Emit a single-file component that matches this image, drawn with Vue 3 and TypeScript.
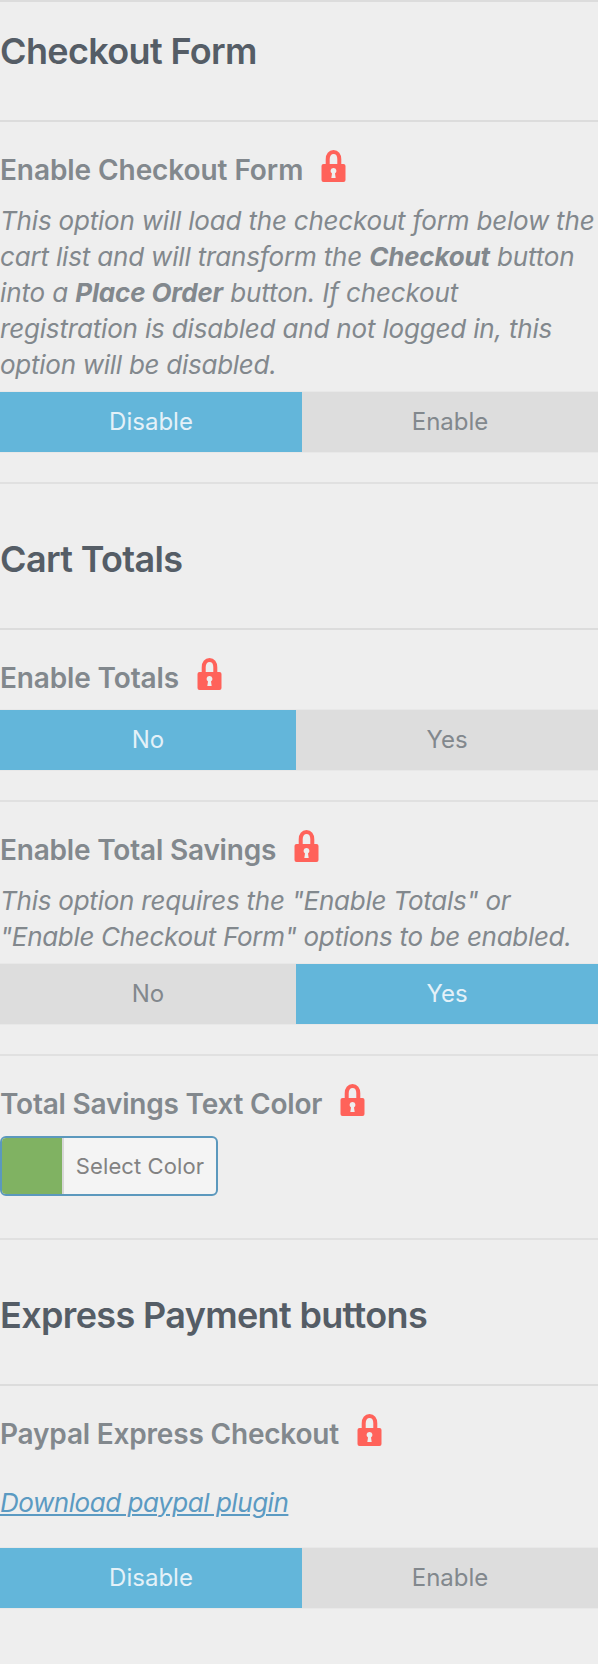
<script setup lang="ts">
interface Line {
  tracking: number
  parts: { text: string; strong?: boolean }[]
}
interface Field {
  label: string
  tracking?: number
  kind: 'toggle' | 'color'
  options?: string[]
  active?: number
  description?: Line[]
  link?: string
}
interface Section {
  title: string
  fields: Field[]
}

const sections: Section[] = [
  {
    title: 'Checkout Form',
    fields: [
      {
        label: 'Enable Checkout Form',
        tracking: -0.08,
        kind: 'toggle',
        options: ['Disable', 'Enable'],
        active: 0,
        description: [
          { tracking: -0.2, parts: [{ text: 'This option will load the checkout form below the' }] },
          {
            tracking: -0.18,
            parts: [{ text: 'cart list and will transform the ' }, { text: 'Checkout', strong: true }, { text: ' button' }],
          },
          {
            tracking: -0.14,
            parts: [{ text: 'into a ' }, { text: 'Place Order', strong: true }, { text: ' button. If checkout' }],
          },
          { tracking: -0.18, parts: [{ text: 'registration is disabled and not logged in, this' }] },
          { tracking: -0.27, parts: [{ text: 'option will be disabled.' }] },
        ],
      },
    ],
  },
  {
    title: 'Cart Totals',
    fields: [
      { label: 'Enable Totals', tracking: -0.14, kind: 'toggle', options: ['No', 'Yes'], active: 0 },
      {
        label: 'Enable Total Savings',
        kind: 'toggle',
        options: ['No', 'Yes'],
        active: 1,
        description: [
          { tracking: -0.24, parts: [{ text: 'This option requires the "Enable Totals" or' }] },
          { tracking: -0.31, parts: [{ text: '"Enable Checkout Form" options to be enabled.' }] },
        ],
      },
      { label: 'Total Savings Text Color', tracking: -0.21, kind: 'color' },
    ],
  },
  {
    title: 'Express Payment buttons',
    fields: [
      {
        label: 'Paypal Express Checkout',
        kind: 'toggle',
        options: ['Disable', 'Enable'],
        active: 0,
        link: 'Download paypal plugin',
      },
    ],
  },
]

const spacing = (value = -0.19) => ({ letterSpacing: `${value}px` })
</script>

<template>
  <main class="panel">
    <section v-for="section in sections" :key="section.title" class="section">
      <h3 class="heading">{{ section.title }}</h3>
      <div v-for="field in section.fields" :key="field.label" class="field" :class="{ 'field-color': field.kind === 'color' }">
        <div class="label-row">
          <span class="label" :style="spacing(field.tracking)">{{ field.label }}</span>
          <svg class="lock" viewBox="0 0 24 32" aria-hidden="true">
            <path d="M6.200 16V9.200C6.200 4.900 8.500 2 12 2s5.800 2.900 5.800 7.200V16" fill="none" stroke="#ff625a" stroke-width="4" />
            <path
              fill="#ff625a"
              fill-rule="evenodd"
              d="M2 14h20a2 2 0 0 1 2 2v14a2 2 0 0 1-2 2H2a2 2 0 0 1-2-2V16a2 2 0 0 1 2-2zM12 18a2.900 2.900 0 0 0-1.500 5.400L9.800 28h4.400l-.7-4.600A2.900 2.900 0 0 0 12 18z"
            />
          </svg>
        </div>
        <div v-if="field.description" class="description">
          <div v-for="(line, i) in field.description" :key="i" class="line" :style="spacing(line.tracking)"><template v-for="(part, j) in line.parts" :key="j"><strong v-if="part.strong">{{ part.text }}</strong><template v-else>{{ part.text }}</template></template></div>
        </div>
        <p v-if="field.link" class="link-row"><a class="link" href="#">{{ field.link }}</a></p>
        <div v-if="field.kind === 'toggle'" class="toggle" :class="{ narrow: field.options?.[0] === 'No' }">
          <button v-for="(option, i) in field.options" :key="option" type="button" class="option" :class="{ on: i === field.active }">{{ option }}</button>
        </div>
        <button v-else type="button" class="picker">
          <span class="swatch"></span>
          <span class="picker-text">Select Color</span>
        </button>
      </div>
    </section>
  </main>
</template>

<style>
html,
body {
  background: #eee;
}
</style>

<style scoped>
.panel {
  width: 598px;
  height: 1664px;
  overflow: hidden;
  background: #eee;
  color: #82888d;
  font-family: Inter, "Liberation Sans", sans-serif;
}
.heading {
  box-sizing: border-box;
  height: 148px;
  margin: 0;
  padding-top: 45px;
  border-top: 2px solid #e0e0e0;
  border-bottom: 2px solid #dcdcdc;
  color: #555d66;
  font-size: 36px;
  font-weight: 600;
  line-height: 60px;
  letter-spacing: -0.65px;
  white-space: nowrap;
}
.section:first-child .heading {
  height: 122px;
  padding-top: 19px;
  border-top-color: #dcdcdc;
}
.field {
  padding: 28px 0 30px;
}
.field + .field {
  border-top: 2px solid #e0e0e0;
}
.field-color {
  padding-bottom: 42px;
}
.label-row {
  display: flex;
  align-items: flex-start;
  height: 52px;
}
.label {
  font-size: 28px;
  font-weight: 600;
  line-height: 40px;
  white-space: nowrap;
}
.lock {
  flex: none;
  width: 25px;
  height: 32px;
  margin-left: 18px;
}
.description {
  padding: 1px 0 9px;
  font-size: 26px;
  font-style: italic;
  line-height: 36px;
}
.line {
  white-space: pre;
}
.description strong {
  font-weight: 700;
}
.link-row {
  height: 82px;
  margin: 0;
  padding-top: 19px;
  box-sizing: border-box;
  font-size: 26px;
  font-style: italic;
  line-height: 36px;
  letter-spacing: -0.46px;
}
.link {
  color: #5b9ac2;
  text-decoration-thickness: 2px;
  text-underline-offset: 2px;
}
.toggle {
  display: grid;
  grid-template-columns: 302px 296px;
  height: 60px;
  box-shadow: 0 0 0 1px #e8e8e8;
}
.toggle.narrow {
  grid-template-columns: 296px 302px;
}
.option {
  padding: 0;
  border: 0;
  background: #ddd;
  color: #82888d;
  font: 400 24px/60px Inter, "Liberation Sans", sans-serif;
}
.option.on {
  background: #63b6da;
  color: #e4f1f8;
}
.picker {
  display: flex;
  box-sizing: border-box;
  width: 218px;
  height: 60px;
  padding: 0;
  overflow: hidden;
  border: 2px solid #5b98bd;
  border-radius: 6px;
  background: #f4f4f4;
  color: #828282;
  font: 400 22px/56px Inter, "Liberation Sans", sans-serif;
  letter-spacing: 0.1px;
}
.swatch {
  flex: none;
  width: 60px;
  height: 56px;
  border-right: 2px solid #d8d8d8;
  background: #80b262;
}
.picker-text {
  flex: 1;
  text-align: center;
  white-space: nowrap;
}
</style>
